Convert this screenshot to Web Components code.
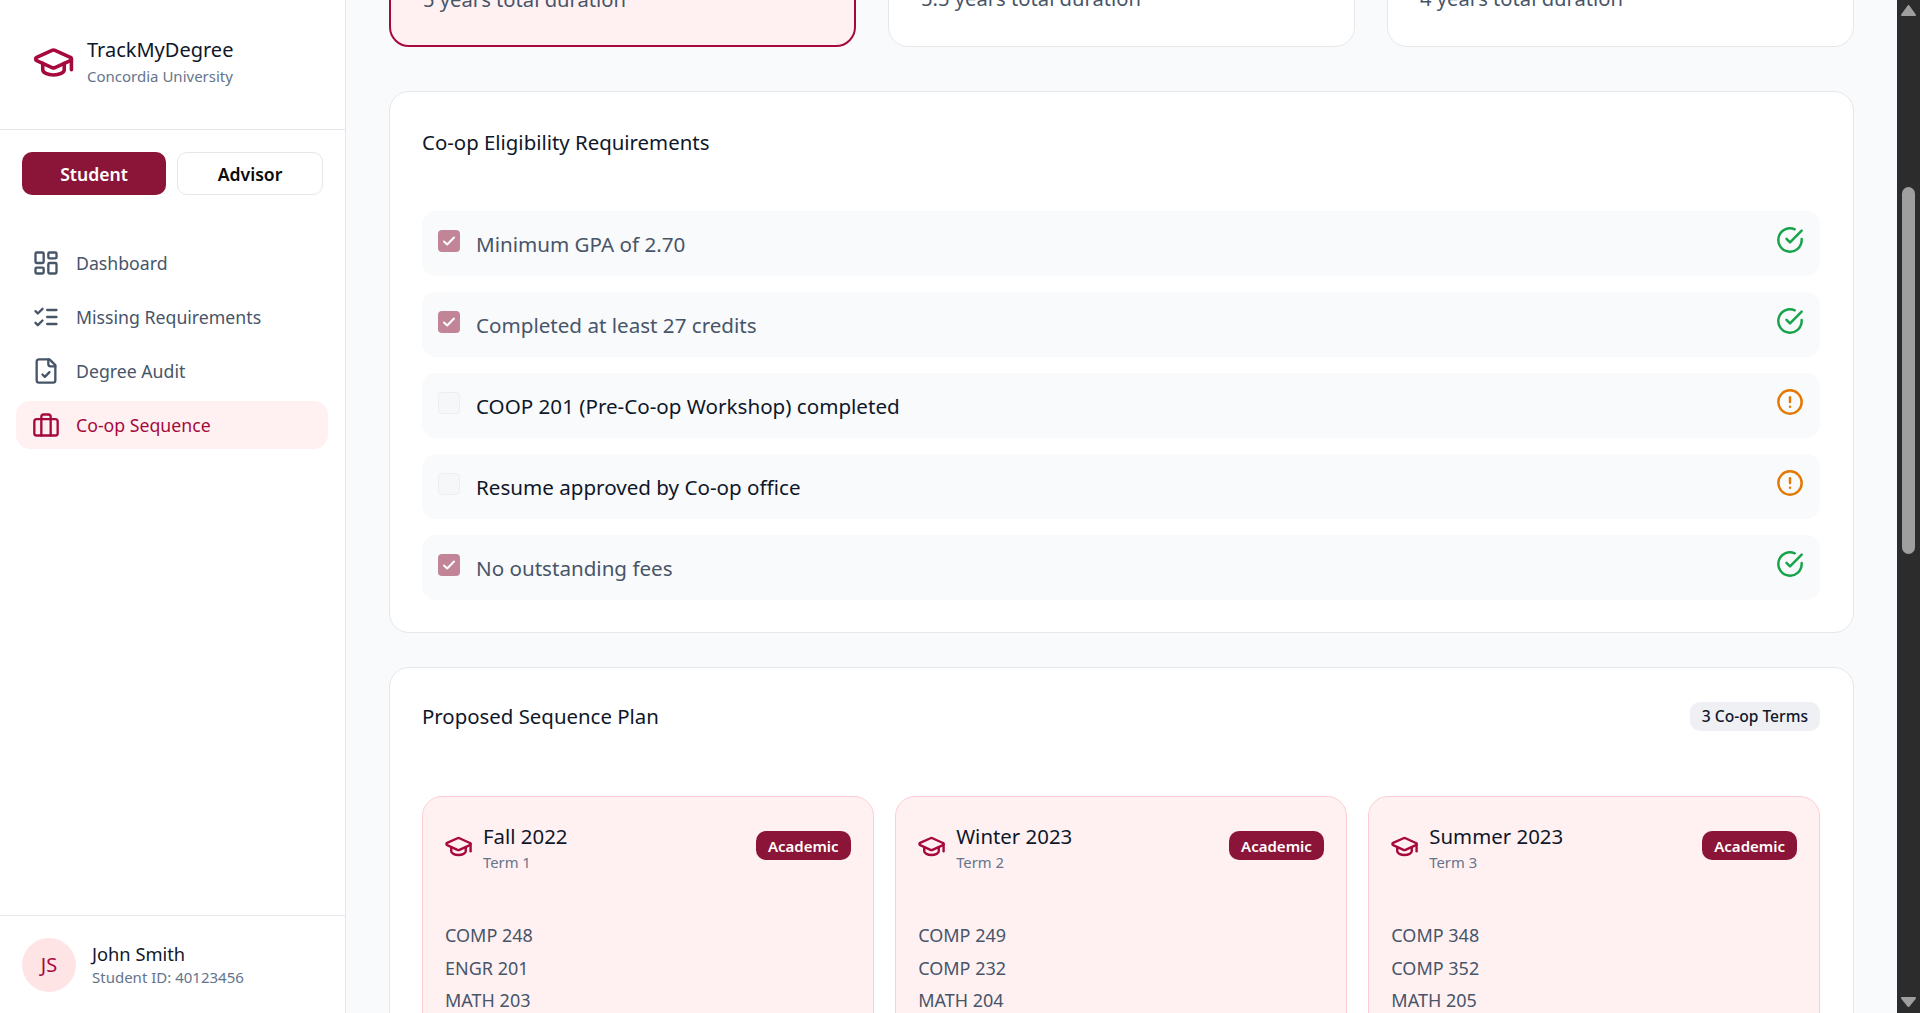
<!DOCTYPE html>
<html lang="en">
<head>
<meta charset="utf-8">
<title>TrackMyDegree</title>
<style>
  html, body { margin: 0; height: 100%; overflow: hidden; }
  body { font-family: "Noto Sans", "Open Sans", sans-serif; color: #0f172a; background: #f9fafb; }
</style>
</head>
<body>
<app-shell>
  <side-bar slot="side">
    <nav-link icon="dashboard">Dashboard</nav-link>
    <nav-link icon="checks">Missing Requirements</nav-link>
    <nav-link icon="file">Degree Audit</nav-link>
    <nav-link icon="briefcase" active>Co-op Sequence</nav-link>
  </side-bar>

  <div slot="main">
    <stat-row>
      <stat-card active>5 years total duration</stat-card>
      <stat-card>5.5 years total duration</stat-card>
      <stat-card>4 years total duration</stat-card>
    </stat-row>

    <content-panel heading="Co-op Eligibility Requirements">
      <req-item done>Minimum GPA of 2.70</req-item>
      <req-item done>Completed at least 27 credits</req-item>
      <req-item>COOP 201 (Pre-Co-op Workshop) completed</req-item>
      <req-item>Resume approved by Co-op office</req-item>
      <req-item done>No outstanding fees</req-item>
    </content-panel>

    <content-panel heading="Proposed Sequence Plan" badge="3 Co-op Terms" grid>
      <term-card name="Fall 2022" term="Term 1">
        <span>COMP 248</span><span>ENGR 201</span><span>MATH 203</span>
      </term-card>
      <term-card name="Winter 2023" term="Term 2">
        <span>COMP 249</span><span>COMP 232</span><span>MATH 204</span>
      </term-card>
      <term-card name="Summer 2023" term="Term 3">
        <span>COMP 348</span><span>COMP 352</span><span>MATH 205</span>
      </term-card>
    </content-panel>
  </div>
</app-shell>

<script>
// lucide style icon paths
const ICONS = {
  cap: '<path d="M21.42 10.922a1 1 0 0 0-.019-1.838L12.83 5.18a2 2 0 0 0-1.66 0L2.6 9.08a1 1 0 0 0 0 1.832l8.57 3.908a2 2 0 0 0 1.66 0z"/><path d="M22 10v6"/><path d="M6 12.5V16a6 3 0 0 0 12 0v-3.5"/>',
  dashboard: '<rect x="3" y="3" width="7" height="9" rx="1"/><rect x="14" y="3" width="7" height="5" rx="1"/><rect x="14" y="12" width="7" height="9" rx="1"/><rect x="3" y="16" width="7" height="5" rx="1"/>',
  checks: '<path d="m3 17 2 2 4-4"/><path d="m3 7 2 2 4-4"/><path d="M13 6h8"/><path d="M13 12h8"/><path d="M13 18h8"/>',
  file: '<path d="M15 2H6a2 2 0 0 0-2 2v16a2 2 0 0 0 2 2h12a2 2 0 0 0 2-2V7Z"/><path d="M14 2v4a2 2 0 0 0 2 2h4"/><path d="m9 15 2 2 4-4"/>',
  briefcase: '<rect x="2" y="7" width="20" height="14" rx="2"/><path d="M16 21V5a2 2 0 0 0-2-2h-4a2 2 0 0 0-2 2v16"/>',
  ok: '<path d="M22 11.08V12a10 10 0 1 1-5.93-9.14"/><path d="m9 11 3 3L22 4"/>',
  warn: '<circle cx="12" cy="12" r="10"/><path d="M12 8v4"/><path d="M12 16h.01"/>'
};

class UiIcon extends HTMLElement {
  connectedCallback() {
    const size = this.getAttribute('size') || 24;
    const stroke = this.getAttribute('stroke') || 2;
    this.attachShadow({ mode: 'open' });
    this.shadowRoot.innerHTML = `
      <style>
        :host { display: block; width: ${size}px; height: ${size}px; flex: none; }
        svg { display: block; width: 100%; height: 100%; fill: none; stroke: currentColor;
              stroke-width: ${stroke}; stroke-linecap: round; stroke-linejoin: round; }
      </style>
      <svg viewBox="0 0 24 24">${ICONS[this.getAttribute('name')]}</svg>`;
  }
}

class AppShell extends HTMLElement {
  connectedCallback() {
    this.attachShadow({ mode: 'open' });
    this.shadowRoot.innerHTML = `
      <style>
        :host { display: flex; height: 1013px; overflow: hidden; }
        .main { flex: 1; min-width: 0; overflow: hidden; background: #f9fafb; }
        .inner { margin-top: -153px; padding: 0 43px; }
      </style>
      <slot name="side"></slot>
      <div class="main"><div class="inner"><slot name="main"></slot></div></div>
      <fake-scroll></fake-scroll>`;
  }
}

// native bars are hidden in headless runs, so the dark one is drawn here
class FakeScroll extends HTMLElement {
  connectedCallback() {
    this.attachShadow({ mode: 'open' });
    this.shadowRoot.innerHTML = `
      <style>
        :host { display: flex; flex-direction: column; width: 23px; flex: none; background: #2c2c2c; align-items: center; }
        svg { display: block; fill: #9f9f9f; stroke: #9f9f9f; stroke-width: 2; stroke-linejoin: round; flex: none; }
        .up { margin-top: 5px; }
        .thumb { width: 13px; height: 367px; background: #9f9f9f; border-radius: 6.5px; margin-top: 171px; }
        .down { margin-top: auto; margin-bottom: 6px; }
      </style>
      <svg class="up" width="15" height="11" viewBox="0 0 15 11"><path d="M7.5 1 14 10H1z"/></svg>
      <div class="thumb"></div>
      <svg class="down" width="15" height="10" viewBox="0 0 15 10"><path d="M1 1h13L7.5 9z"/></svg>`;
  }
}

class SideBar extends HTMLElement {
  connectedCallback() {
    this.attachShadow({ mode: 'open' });
    this.shadowRoot.innerHTML = `
      <style>
        :host { display: flex; flex-direction: column; width: 345px; flex: none; height: 1013px; box-sizing: content-box;
                background: #fff; border-right: 1px solid #e5e7eb; }
        .brand { height: 130px; box-sizing: border-box; border-bottom: 1px solid #e5e7eb; display: flex; align-items: center; gap: 12px; padding: 0 0 5px 32px; color: #a6093d; }
        .brand b { display: block; font-weight: 400; font-size: 20px; line-height: 26px; color: #0f172a; }
        .brand small { display: block; font-size: 15px; line-height: 24px; margin-top: 1px; color: #64748b; }
        .roles { display: flex; gap: 11px; padding: 22px 22px 0; }
        .roles div { flex: 1; height: 43px; box-sizing: border-box; border-radius: 10px; display: flex; align-items: center; justify-content: center;
                     font-size: 17.6px; font-weight: 600; }
        .on { background: #8b1538; color: #fff; }
        .off { background: #fff; border: 1px solid #e5e7eb; color: #0a0a0a; }
        nav { display: flex; flex-direction: column; gap: 6px; padding: 43.5px 17px 0 16px; }
        .user { margin-top: auto; height: 98px; box-sizing: border-box; border-top: 1px solid #e5e7eb; display: flex; align-items: center; gap: 16px; padding: 0 0 0 22px; }
        .avatar { width: 54px; height: 54px; border-radius: 50%; background: #ffe4e6; color: #a6093d; display: flex; align-items: center; justify-content: center; font-size: 20px; }
        .user b { display: block; font-weight: 400; font-size: 18.3px; line-height: 25px; color: #0f172a; }
        .user small { display: block; font-size: 15px; line-height: 22px; color: #64748b; }
      </style>
      <div class="brand">
        <ui-icon name="cap" size="43"></ui-icon>
        <div><b>TrackMyDegree</b><small>Concordia University</small></div>
      </div>
      <div class="roles"><div class="on">Student</div><div class="off">Advisor</div></div>
      <nav><slot></slot></nav>
      <div class="user">
        <div class="avatar">JS</div>
        <div><b>John Smith</b><small>Student ID: 40123456</small></div>
      </div>`;
  }
}

class NavLink extends HTMLElement {
  connectedCallback() {
    this.attachShadow({ mode: 'open' });
    this.shadowRoot.innerHTML = `
      <style>
        :host { display: flex; align-items: center; gap: 16px; height: 48px; padding-left: 16px; border-radius: 14px;
                color: #475569; font-size: 17.7px; }
        :host([active]) { background: #fff1f2; color: #a6093d; }
      </style>
      <ui-icon name="${this.getAttribute('icon')}" size="28"></ui-icon><span><slot></slot></span>`;
  }
}

class StatRow extends HTMLElement {
  connectedCallback() {
    this.attachShadow({ mode: 'open' });
    this.shadowRoot.innerHTML = `
      <style>:host { display: grid; grid-template-columns: repeat(3, 1fr); gap: 32px; margin-bottom: 44px; }</style>
      <slot></slot>`;
  }
}

class StatCard extends HTMLElement {
  connectedCallback() {
    this.attachShadow({ mode: 'open' });
    this.shadowRoot.innerHTML = `
      <style>
        :host { display: block; box-sizing: border-box; height: 200px; padding: 136px 32px 0; background: #fff;
                border: 1px solid #e5e7eb; border-radius: 20px; color: #475569; font-size: 20.2px; line-height: 28px; }
        :host([active]) { background: #fff1f2; border: 2px solid #a6093d; }
      </style>
      <slot></slot>`;
  }
}

class ContentPanel extends HTMLElement {
  connectedCallback() {
    const badge = this.getAttribute('badge');
    this.attachShadow({ mode: 'open' });
    this.shadowRoot.innerHTML = `
      <style>
        :host { display: block; background: #fff; border: 1px solid #e5e7eb; border-radius: 20px; padding: 32px 33px 32px 32px; margin-bottom: 34px; }
        header { display: flex; justify-content: space-between; align-items: center; height: 35px; margin-bottom: 52px; }
        h2 { margin: 0; font-weight: 400; font-size: 20.4px; color: #0f172a; }
        .pill { background: #eef0f4; border-radius: 10px; height: 29px; box-sizing: border-box; padding: 0 12px; display: flex; align-items: center;
                font-size: 15.6px; font-weight: 500; color: #0f172a; }
        .body { display: flex; flex-direction: column; gap: 16px; }
        :host([grid]) header { height: 32px; margin-bottom: 64px; }
        :host([grid]) .body { display: grid; grid-template-columns: repeat(3, 1fr); gap: 21.5px; }
      </style>
      <header><h2>${this.getAttribute('heading')}</h2>${badge ? `<div class="pill">${badge}</div>` : ''}</header>
      <div class="body"><slot></slot></div>`;
  }
}

class ReqItem extends HTMLElement {
  connectedCallback() {
    const done = this.hasAttribute('done');
    this.attachShadow({ mode: 'open' });
    this.shadowRoot.innerHTML = `
      <style>
        :host { display: flex; height: 65px; box-sizing: border-box; padding: 19px 16px 0 16px; background: #f9fafb; border-radius: 14px; gap: 16px; }
        .box { width: 22px; height: 22px; box-sizing: border-box; border-radius: 4px; flex: none; display: flex; align-items: center; justify-content: center; }
        .box.yes { background: #c28598; color: #fff; }
        .box.no { background: #f6f7f9; border: 1px solid #eceef1; }
        .txt { flex: 1; font-size: 20.6px; line-height: 28px; color: ${done ? '#475569' : '#0f172a'}; }
        .state { margin-top: -4px; color: ${done ? '#16a34a' : '#e67700'}; }
        svg { display: block; }
      </style>
      <div class="box ${done ? 'yes' : 'no'}">
        ${done ? '<svg width="16" height="16" viewBox="0 0 16 16" fill="none" stroke="currentColor" stroke-width="2" stroke-linecap="round" stroke-linejoin="round"><path d="m3 8.5 3.2 3L13 4.5"/></svg>' : ''}
      </div>
      <div class="txt"><slot></slot></div>
      <div class="state"><ui-icon name="${done ? 'ok' : 'warn'}" size="28" stroke="2.1"></ui-icon></div>`;
  }
}

class TermCard extends HTMLElement {
  connectedCallback() {
    this.attachShadow({ mode: 'open' });
    this.shadowRoot.innerHTML = `
      <style>
        :host { display: block; box-sizing: border-box; height: 340px; padding: 22px; background: #fff1f2; border: 1px solid #fecdd3; border-radius: 20px; }
        .top { display: flex; align-items: flex-start; gap: 10px; height: 99px; margin-top: 1px; }
        .cap { color: #a6093d; margin: 12px 0 0 -1px; }
        .name { font-size: 20.4px; line-height: 32px; color: #0f172a; }
        .term { font-size: 14.8px; line-height: 20px; color: #64748b; }
        .tag { margin-left: auto; margin-top: 11px; height: 29px; padding: 0 12px; background: #8b1538; color: #fff; border-radius: 10px; display: flex; align-items: center;
               font-size: 15px; font-weight: 600; }
        .courses { display: flex; flex-direction: column; color: #475569; font-size: 18px; line-height: 32.6px; }
        ::slotted(span) { display: block; }
      </style>
      <div class="top">
        <ui-icon class="cap" name="cap" size="29"></ui-icon>
        <div><div class="name">${this.getAttribute('name')}</div><div class="term">${this.getAttribute('term')}</div></div>
        <div class="tag">Academic</div>
      </div>
      <div class="courses"><slot></slot></div>`;
  }
}

customElements.define('ui-icon', UiIcon);
customElements.define('app-shell', AppShell);
customElements.define('fake-scroll', FakeScroll);
customElements.define('side-bar', SideBar);
customElements.define('nav-link', NavLink);
customElements.define('stat-row', StatRow);
customElements.define('stat-card', StatCard);
customElements.define('content-panel', ContentPanel);
customElements.define('req-item', ReqItem);
customElements.define('term-card', TermCard);
</script>
</body>
</html>
